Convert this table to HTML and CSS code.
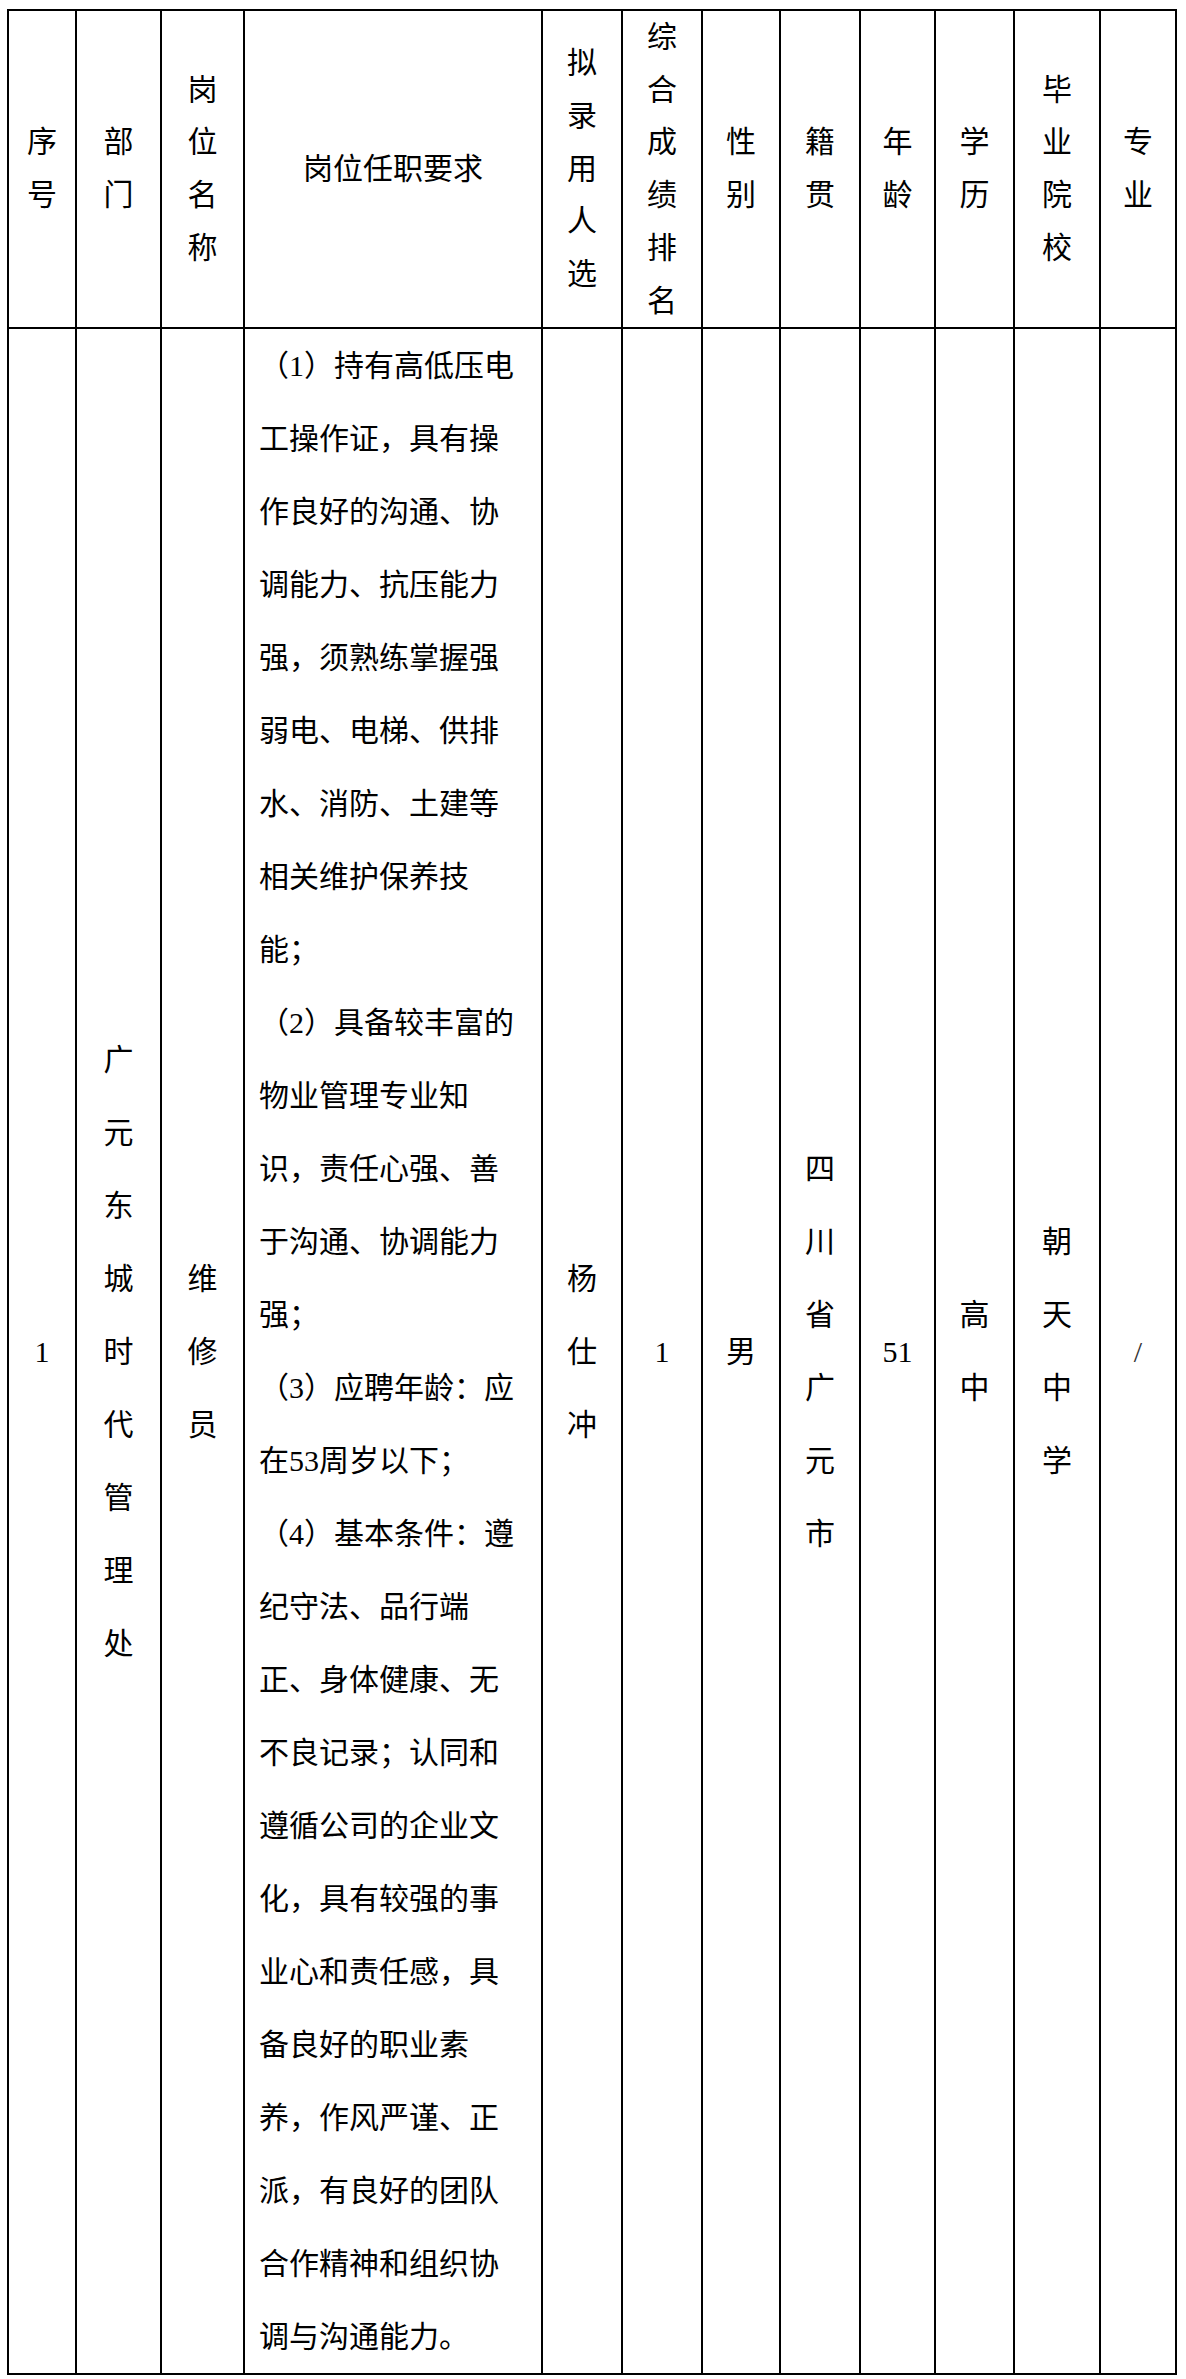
FILE: index.html
```html
<!DOCTYPE html>
<html lang="zh-CN">
<head>
<meta charset="utf-8">
<title>拟录用人员公示</title>
<link rel="stylesheet" href="styles.css">
</head>
<body>
<table class="sheet">
  <colgroup>
    <col class="c-no">
    <col class="c-dept">
    <col class="c-post">
    <col class="c-req">
    <col class="c-name">
    <col class="c-rank">
    <col class="c-sex">
    <col class="c-origin">
    <col class="c-age">
    <col class="c-edu">
    <col class="c-school">
    <col class="c-major">
  </colgroup>
  <thead>
    <tr class="head">
      <th>序<br>号</th>
      <th>部<br>门</th>
      <th>岗<br>位<br>名<br>称</th>
      <th>岗位任职要求</th>
      <th>拟<br>录<br>用<br>人<br>选</th>
      <th>综<br>合<br>成<br>绩<br>排<br>名</th>
      <th>性<br>别</th>
      <th>籍<br>贯</th>
      <th>年<br>龄</th>
      <th>学<br>历</th>
      <th>毕<br>业<br>院<br>校</th>
      <th>专<br>业</th>
    </tr>
  </thead>
  <tbody>
    <tr class="body">
      <td>1</td>
      <td>广<br>元<br>东<br>城<br>时<br>代<br>管<br>理<br>处</td>
      <td>维<br>修<br>员</td>
      <td class="req">（1）持有高低压电<br>工操作证，具有操<br>作良好的沟通、协<br>调能力、抗压能力<br>强，须熟练掌握强<br>弱电、电梯、供排<br>水、消防、土建等<br>相关维护保养技<br>能；<br>（2）具备较丰富的<br>物业管理专业知<br>识，责任心强、善<br>于沟通、协调能力<br>强；<br>（3）应聘年龄：应<br>在53周岁以下；<br>（4）基本条件：遵<br>纪守法、品行端<br>正、身体健康、无<br>不良记录；认同和<br>遵循公司的企业文<br>化，具有较强的事<br>业心和责任感，具<br>备良好的职业素<br>养，作风严谨、正<br>派，有良好的团队<br>合作精神和组织协<br>调与沟通能力。</td>
      <td>杨<br>仕<br>冲</td>
      <td>1</td>
      <td>男</td>
      <td>四<br>川<br>省<br>广<br>元<br>市</td>
      <td>51</td>
      <td>高<br>中</td>
      <td>朝<br>天<br>中<br>学</td>
      <td class="slash">/</td>
    </tr>
  </tbody>
</table>
</body>
</html>
```

FILE: styles.css
```css
html, body {
  margin: 0;
  padding: 0;
  background: #ffffff;
}

body {
  font-family: "Liberation Serif", "Noto Sans CJK SC", serif;
  font-size: 30px;
  color: #000000;
}

.sheet {
  margin: 9px 0 0 7px;
  border-collapse: collapse;
  table-layout: fixed;
  width: 1170px;
  border: 2px solid #000000;
}

.sheet th,
.sheet td {
  border: 2px solid #000000;
  padding: 0;
  text-align: center;
  vertical-align: middle;
  font-weight: normal;
  white-space: nowrap;
}

.c-no { width: 68px; }
.c-dept { width: 85px; }
.c-post { width: 83px; }
.c-req { width: 298px; }
.c-name { width: 80px; }
.c-rank { width: 80px; }
.c-sex { width: 78px; }
.c-origin { width: 80px; }
.c-age { width: 75px; }
.c-edu { width: 79px; }
.c-school { width: 86px; }
.c-major { width: 76px; }

.head th {
  height: 316px;
  line-height: 52.7px;
}

.body td {
  line-height: 73px;
}

.body td.req {
  text-align: left;
  padding: 0 0 0 14px;
}

.body td.slash {
  color: #333333;
}
```
